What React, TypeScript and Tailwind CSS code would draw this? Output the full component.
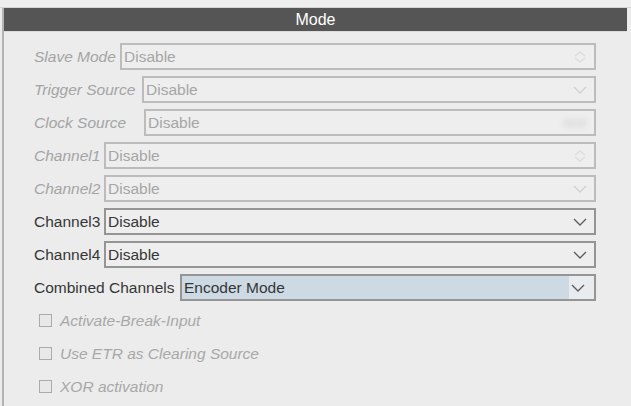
import React from "react";

type Row = { label: string; w: number; value: string; enabled: boolean; icon?: "chev" | "updown" | "blur" | "none" };

const rows: Row[] = [
  { label: "Slave Mode", w: 86, value: "Disable", enabled: false, icon: "updown" },
  { label: "Trigger Source", w: 108, value: "Disable", enabled: false, icon: "chev" },
  { label: "Clock Source", w: 110, value: "Disable", enabled: false, icon: "blur" },
  { label: "Channel1", w: 70, value: "Disable", enabled: false, icon: "updown" },
  { label: "Channel2", w: 70, value: "Disable", enabled: false, icon: "chev" },
  { label: "Channel3", w: 70, value: "Disable", enabled: true, icon: "chev" },
  { label: "Channel4", w: 70, value: "Disable", enabled: true, icon: "chev" },
];

function Chevron({ color }: { color: string }) {
  return (
    <svg width="14" height="8" viewBox="0 0 14 8" className="shrink-0">
      <polyline points="1,1 7,7 13,1" fill="none" stroke={color} strokeWidth="1.4" />
    </svg>
  );
}

function UpDown() {
  return (
    <svg width="14" height="12" viewBox="0 0 14 12" className="shrink-0 opacity-40">
      <polyline points="2,5 7,1 12,5" fill="none" stroke="#c4c4c4" strokeWidth="1.6" />
      <polyline points="2,7 7,11 12,7" fill="none" stroke="#c4c4c4" strokeWidth="1.6" />
    </svg>
  );
}

function Field({ row }: { row: Row }) {
  const labelCls = row.enabled ? "text-[#363636]" : "text-[#a4a4a4] italic";
  const boxBorder = row.enabled ? "border-[#959595]" : "border-[#bcbcbc]";
  const valueCls = row.enabled ? "text-[#363636]" : "text-[#a6a6a6]";
  return (
    <div className="flex h-[27px] items-center">
      <div className={`shrink-0 ${labelCls}`} style={{ width: row.w }}>
        {row.label}
      </div>
      <div
        className={`flex h-[27px] flex-1 items-center justify-between border-2 ${boxBorder} bg-[#eeeeee] pl-[2px] pr-[7px]`}
      >
        <span className={valueCls}>{row.value}</span>
        {row.icon === "chev" && <Chevron color={row.enabled ? "#5e5e5e" : "#d0d0d0"} />}
        {row.icon === "updown" && <UpDown />}
        {row.icon === "blur" && <div className="h-[10px] w-[24px] rounded-sm bg-[#e3e3e3] blur-[2px]" />}
      </div>
    </div>
  );
}

function Check({ label }: { label: string }) {
  return (
    <div className="flex h-[27px] items-center">
      <div className="ml-[5px] h-[13px] w-[13px] border border-[#ababab] bg-[#e8e8e8]" />
      <span className="ml-[8px] italic text-[#a8a8a8]">{label}</span>
    </div>
  );
}

export default function App() {
  return (
    <div
      className="relative h-[406px] w-[631px] overflow-hidden bg-[#ececec] text-[15.5px] leading-none"
      style={{ fontFamily: '"Liberation Sans", Arial, sans-serif' }}
    >
      <div className="h-[8px] border-b border-[#d4d4d4] bg-[#eeeeee]" />
      <div className="ml-[2px] mr-[4px] h-[398px] border-l-[2px] border-[#b3b3b3]">
        <div className="flex h-[23px] items-center justify-center bg-[#555555] text-[16px] text-white">Mode</div>
        <div className="h-px bg-[#dcdcdc]" />
        <div className="ml-[30px] mt-[11px] flex w-[562px] flex-col gap-[6px]">
          {rows.map((r) => (
            <Field key={r.label} row={r} />
          ))}
          <div className="flex h-[27px] items-center">
            <div className="w-[146px] shrink-0 text-[#363636]">Combined Channels</div>
            <div className="flex h-[27px] flex-1 items-stretch border-2 border-[#959595] bg-[#e9ecee]">
              <div className="flex flex-1 items-center bg-[#cddae4] pl-[2px] text-[#363636]">Encoder Mode</div>
              <div className="flex w-[25px] items-center justify-start pl-[2px]">
                <Chevron color="#5e5e5e" />
              </div>
            </div>
          </div>
          <div className="flex flex-col gap-[6px]">
            <Check label="Activate-Break-Input" />
            <Check label="Use ETR as Clearing Source" />
            <Check label="XOR activation" />
          </div>
        </div>
      </div>
    </div>
  );
}
